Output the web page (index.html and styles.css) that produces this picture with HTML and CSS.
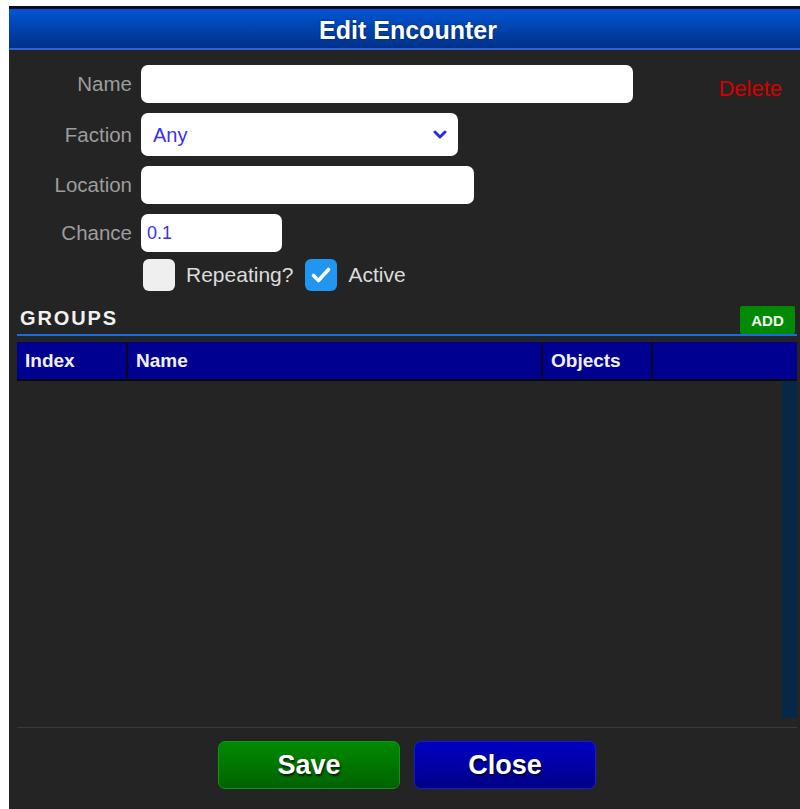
FILE: index.html
```html
<!DOCTYPE html>
<html lang="en">
<head>
<meta charset="utf-8">
<title>Edit Encounter</title>
<link rel="stylesheet" href="styles.css">
</head>
<body>
<div class="dialog">
  <div class="dialog-title">Edit Encounter</div>

  <div class="fields">
    <div class="field-col">
      <div class="field-grid">
        <label class="field-label" for="enc-name">Name</label>
        <input class="text-input input-name" id="enc-name" type="text">

        <label class="field-label" for="enc-faction">Faction</label>
        <div class="select-wrap">
          <select class="select-input" id="enc-faction">
            <option>Any</option>
          </select>
          <svg class="select-chevron" width="14" height="10" viewBox="0 0 14 10"><polyline points="2,2 7,7 12,2" fill="none" stroke="#2a2af0" stroke-width="3" stroke-linecap="round" stroke-linejoin="round"/></svg>
        </div>

        <label class="field-label" for="enc-location">Location</label>
        <input class="text-input input-location" id="enc-location" type="text">

        <label class="field-label" for="enc-chance">Chance</label>
        <input class="text-input input-chance" id="enc-chance" type="text" value="0.1">
      </div>

      <div class="check-row">
        <span class="check-box"></span>
        <span class="check-label">Repeating?</span>
        <span class="check-box is-checked">
          <svg width="32" height="32" viewBox="0 0 32 32"><polyline points="8.5,16.5 13.5,21.5 23.5,10.5" fill="none" stroke="#ffffff" stroke-width="3.6" stroke-linecap="round" stroke-linejoin="round"/></svg>
        </span>
        <span class="check-label">Active</span>
      </div>
    </div>

    <a class="delete-link">Delete</a>
  </div>

  <section class="groups">
    <div class="groups-head">
      <h2 class="groups-title">GROUPS</h2>
      <button class="add-btn">ADD</button>
    </div>
    <div class="groups-table">
      <div class="table-head">
        <div class="th">Index</div>
        <div class="th">Name</div>
        <div class="th">Objects</div>
        <div class="th"></div>
      </div>
      <div class="table-body">
        <div class="scroll-track"></div>
      </div>
    </div>
  </section>

  <div class="dialog-footer">
    <button class="footer-btn btn-save">Save</button>
    <button class="footer-btn btn-close">Close</button>
  </div>
</div>
</body>
</html>
```

FILE: styles.css
```css
html, body {
  margin: 0;
  padding: 0;
  background: #ffffff;
  overflow: hidden;
  height: 809px;
}

body {
  font-family: "Liberation Sans", Arial, sans-serif;
}

.dialog {
  margin: 6px 0 0 9px;
  width: 798px;
  height: 803px;
  background: #242424;
  display: flex;
  flex-direction: column;
}

/* title bar */
.dialog-title {
  height: 39px;
  border-top: 3px solid #060a1c;
  border-bottom: 2px solid #2f62d6;
  background: linear-gradient(#0055d6, #003c9e 70%, #00308a);
  color: #ffffff;
  font-weight: bold;
  font-size: 25px;
  line-height: 42px;
  text-align: center;
  text-shadow: 0 0 2px rgba(0, 0, 0, 0.6);
}

/* form */
.fields {
  display: flex;
  align-items: flex-start;
  padding-top: 15px;
}

.field-col {
  flex: 1;
}

.field-grid {
  display: grid;
  grid-template-columns: 123px auto;
  column-gap: 9px;
  row-gap: 10px;
  align-items: center;
  justify-items: start;
}

.field-label {
  justify-self: end;
  color: #9d9d9d;
  font-size: 20.5px;
}

.text-input,
.select-input {
  box-sizing: border-box;
  height: 38px;
  border: none;
  border-radius: 7px;
  background: #ffffff;
  font-family: "Liberation Sans", Arial, sans-serif;
  outline: none;
  margin: 0;
}

.input-name {
  width: 492px;
}

.input-location {
  width: 333px;
}

.input-chance {
  width: 141px;
  padding: 0 6px;
  font-size: 18px;
  color: #3a2ff0;
}

.select-wrap {
  position: relative;
}

.select-input {
  appearance: none;
  -webkit-appearance: none;
  width: 317px;
  height: 43px;
  padding: 0 12px;
  font-size: 20px;
  color: #3a2ff0;
}

.select-chevron {
  position: absolute;
  right: 11px;
  top: 17px;
}

.check-row {
  display: flex;
  align-items: center;
  padding-left: 134px;
  margin-top: 7px;
}

.check-box {
  width: 32px;
  height: 32px;
  border-radius: 6px;
  background: #efefef;
  display: block;
}

.check-box.is-checked {
  background: #2196f0;
  margin-left: 12px;
}

.check-box svg {
  display: block;
}

.check-label {
  margin-left: 11px;
  color: #dcdcdc;
  font-size: 21px;
}

.delete-link {
  margin: 12px 25px 0 0;
  color: #d40000;
  font-size: 22px;
  line-height: 24px;
}

/* groups list */
.groups {
  padding: 15px 10px 0 8px;
}

.groups-head {
  display: flex;
  justify-content: space-between;
  align-items: flex-end;
  border-bottom: 2px solid #1a6ae6;
}

.groups-title {
  margin: 0 0 5px 3px;
  color: #f2f2f2;
  font-size: 20px;
  font-weight: bold;
  letter-spacing: 1.9px;
  line-height: 22px;
}

.add-btn {
  width: 55px;
  height: 28px;
  margin-right: 2px;
  border: none;
  border-radius: 2px;
  background: #038a03;
  color: #f4f4f4;
  font-family: "Liberation Sans", Arial, sans-serif;
  font-weight: bold;
  font-size: 15px;
  padding: 0;
}

.groups-table {
  margin-top: 6px;
}

.table-head {
  display: grid;
  grid-template-columns: 111px 415px 110px 1fr;
  height: 39px;
  background: #000090;
  border-bottom: 2px solid #050510;
  box-sizing: border-box;
}

.th {
  border-right: 2px solid #0a0a1a;
  padding-left: 8px;
  color: #f0f0f0;
  font-weight: bold;
  font-size: 19px;
  line-height: 38px;
}

.th:last-child {
  border-right: none;
}

.table-body {
  height: 337px;
  display: flex;
  justify-content: flex-end;
}

.scroll-track {
  width: 15px;
  background: #052848;
}

/* footer buttons */
.dialog-footer {
  margin: 9px 10px 0 8px;
  border-top: 1px solid #3a3a3a;
  padding-top: 13px;
  display: flex;
  justify-content: center;
  gap: 14px;
}

.footer-btn {
  width: 182px;
  height: 48px;
  border-radius: 7px;
  color: #ffffff;
  font-family: "Liberation Sans", Arial, sans-serif;
  font-weight: bold;
  font-size: 27px;
  text-shadow: 1px 2px 2px rgba(0, 0, 0, 0.75);
  padding: 0;
}

.btn-save {
  border: 1px solid #0b9a0b;
  background: linear-gradient(#008a00, #006200);
}

.btn-close {
  border: 1px solid #1a1ad0;
  background: linear-gradient(#0000c4, #000088);
}
```
